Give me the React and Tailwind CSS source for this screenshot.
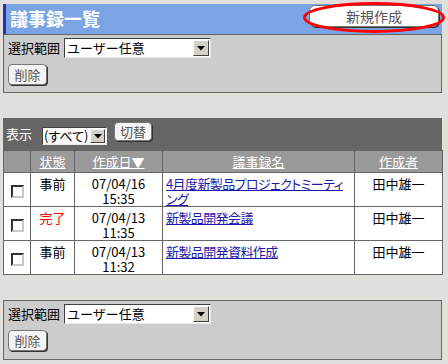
import React from 'react';

// ── small widgets ─────────────────────────────────────────────────────────────
function Select({ value, width }) {
  return (
    <div
      className={`${width} h-[20px] bg-white flex items-center justify-between border border-t-[#404040] border-l-[#404040] border-r-[#e8e8e8] border-b-[#e8e8e8]`}
    >
      <span className="pl-[2px] leading-[16px] whitespace-nowrap">{value}</span>
      <span className="w-[16px] h-[16px] mr-[1px] bg-[#d4d0c8] border border-t-white border-l-white border-r-[#404040] border-b-[#404040] flex items-center justify-center">
        <svg width="8" height="5" viewBox="0 0 8 5">
          <path d="M0 0h8L4 4.5z" fill="#000" />
        </svg>
      </span>
    </div>
  );
}

function Button({ children, className = '' }) {
  return (
    <div
      className={`flex items-center justify-center rounded-[4px] bg-[#f4f4f4] border border-[#777] shadow-[1px_1px_0_#333] text-[#555] leading-none ${className}`}
    >
      {children}
    </div>
  );
}

function Checkbox() {
  return (
    <span className="inline-block w-[13px] h-[13px] bg-white border-2 border-t-[#333] border-l-[#333] border-r-[#c8c8c8] border-b-[#c8c8c8] align-middle" />
  );
}

function ScopePanel({ height }) {
  return (
    <div className={`${height} bg-[#cccccc] border border-[#666] pl-[4px] pt-[3px]`}>
      <div className="flex items-center gap-[4px]">
        <span className="leading-[20px]">選択範囲</span>
        <Select value="ユーザー任意" width="w-[147px]" />
      </div>
      <Button className="mt-[6px] w-[39px] h-[21px]">削除</Button>
    </div>
  );
}

const rows = [
  { state: '事前', done: false, date: '07/04/16', time: '15:35', title: '4月度新製品プロジェクトミーティング', author: '田中雄一' },
  { state: '完了', done: true, date: '07/04/13', time: '11:35', title: '新製品開発会議', author: '田中雄一' },
  { state: '事前', done: false, date: '07/04/13', time: '11:32', title: '新製品開発資料作成', author: '田中雄一' },
];

// ── page ──────────────────────────────────────────────────────────────────────
export default function App() {
  return (
    <div className="relative w-[448px] h-[364px] overflow-hidden bg-[#e0dfdc] pt-[4px] pl-[3px] pr-[6px] text-[13px] text-black font-['Noto_Sans_CJK_JP',sans-serif]">
      {/* Title bar */}
      <div className="h-[30px] bg-[#7ba4e4] border-l-[3px] border-l-[#2c2cb4] flex items-start justify-between">
        <h1 className="pl-[4px] leading-[29px] text-[18px] font-bold text-white">議事録一覧</h1>
        <Button className="mt-[1px] mr-[3px] w-[130px] h-[22px] rounded-[6px] bg-white text-[14px] text-[#555]">
          新規作成
        </Button>
      </div>

      <ScopePanel height="h-[59px]" />

      {/* List */}
      <div className="mt-[25px]">
        <div className="h-[32px] bg-[#666] flex items-start text-white">
          <span className="ml-[3px] mt-[7px] leading-[18px]">表示</span>
          <div className="ml-[10px] mt-[9px] text-black">
            <div className="w-[65px] h-[18px] bg-white flex items-center justify-between border border-t-[#404040] border-l-[#404040] border-r-[#e8e8e8] border-b-[#e8e8e8]">
              <span className="pl-[1px] leading-[14px] text-[13px] whitespace-nowrap [font-feature-settings:'palt']">(すべて)</span>
              <span className="w-[15px] h-[14px] mr-[1px] bg-[#d4d0c8] border border-t-white border-l-white border-r-[#404040] border-b-[#404040] flex items-center justify-center">
                <svg width="8" height="5" viewBox="0 0 8 5">
                  <path d="M0 0h8L4 4.5z" fill="#000" />
                </svg>
              </span>
            </div>
          </div>
          <Button className="ml-[7px] mt-[4px] w-[38px] h-[19px]">切替</Button>
        </div>

        <table className="w-[439px] table-fixed border-collapse">
          <colgroup>
            <col className="w-[27px]" />
            <col className="w-[44px]" />
            <col className="w-[88px]" />
            <col className="w-[192px]" />
            <col className="w-[88px]" />
          </colgroup>
          <thead>
            <tr className="h-[22px] bg-[#999] text-white">
              <th className="border border-[#666] font-normal" />
              <th className="border border-[#666] font-normal underline">状態</th>
              <th className="border border-[#666] font-normal underline">作成日▼</th>
              <th className="border border-[#666] font-normal underline">議事録名</th>
              <th className="border border-[#666] font-normal underline">作成者</th>
            </tr>
          </thead>
          <tbody className="bg-white">
            {rows.map((r, i) => (
              <tr key={i} className="h-[34px]">
                <td className="border border-[#666] text-center align-middle">
                  <Checkbox />
                </td>
                <td className={`border border-[#666] text-center align-top pt-[3px] leading-[15px] ${r.done ? 'text-[#ff0000]' : ''}`}>
                  {r.state}
                </td>
                <td className="border border-[#666] text-center align-top pt-[3px] leading-[15px]">
                  {r.date}
                  <br />
                  {r.time}
                </td>
                <td className="border border-[#666] align-top pt-[3px] pl-[3px] pr-[2px] leading-[15px] tracking-[-0.6px] [line-break:anywhere] [font-feature-settings:'palt']">
                  <a className="text-[#1a1aaa] underline cursor-pointer">{r.title}</a>
                </td>
                <td className="border border-[#666] text-center align-top pt-[3px] leading-[15px]">{r.author}</td>
              </tr>
            ))}
          </tbody>
        </table>
      </div>

      <div className="mt-[25px]">
        <ScopePanel height="h-[60px]" />
      </div>

      {/* red highlight round the create button */}
      <svg className="absolute left-[302px] top-[1px]" width="146" height="33" viewBox="0 0 146 33">
        <ellipse cx="72" cy="16.5" rx="69.5" ry="14" fill="none" stroke="#ff0000" strokeWidth="3" />
      </svg>
    </div>
  );
}
